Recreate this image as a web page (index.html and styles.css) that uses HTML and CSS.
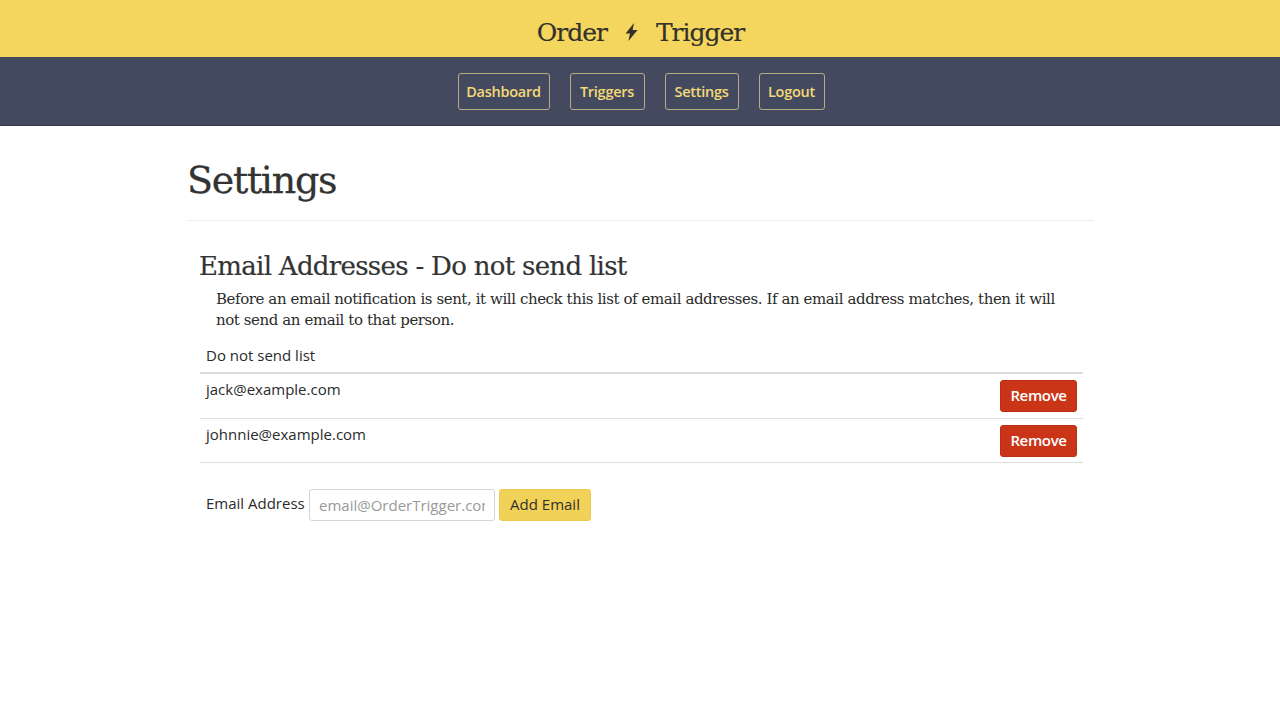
FILE: index.html
```html
<!DOCTYPE html>
<html lang="en">
<head>
<meta charset="utf-8">
<title>Order Trigger - Settings</title>
<link rel="stylesheet" href="styles.css">
</head>
<body>
<header class="brand">
  <span>Order</span>
  <svg class="bolt" viewBox="0 0 13 18" width="13" height="18" aria-hidden="true"><path d="M9 0 .6 10.4H5L3.4 18 12.6 7H7.6Z"/></svg>
  <span>Trigger</span>
</header>
<nav class="nav">
  <a class="nav-link nav-dashboard" href="#">Dashboard</a>
  <a class="nav-link nav-triggers" href="#">Triggers</a>
  <a class="nav-link nav-settings" href="#">Settings</a>
  <a class="nav-link nav-logout" href="#">Logout</a>
</nav>
<main class="container">
  <h1 class="page-title">Settings</h1>
  <section class="section">
    <h2 class="section-title">Email Addresses - Do not send list</h2>
    <p class="intro">Before an email notification is sent, it will check this list of email addresses. If an email address matches, then it will not send an email to that person.</p>
    <div class="table">
      <div class="table-head">Do not send list</div>
      <div class="row">
        <span class="email">jack@example.com</span>
        <button class="btn btn-remove" type="button">Remove</button>
      </div>
      <div class="row">
        <span class="email">johnnie@example.com</span>
        <button class="btn btn-remove" type="button">Remove</button>
      </div>
    </div>
    <form class="add-form">
      <label class="add-label" for="email">Email Address</label>
      <input class="add-input" id="email" type="text" placeholder="email@OrderTrigger.com">
      <button class="btn btn-add" type="button">Add Email</button>
    </form>
  </section>
</main>
</body>
</html>
```
FILE: styles.css
```css
* { box-sizing: border-box; }
html, body { margin: 0; padding: 0; background: #fff; }
body { font-family: "Open Sans", "Noto Sans", sans-serif; color: #2b2b2b; }

.brand {
  height: 57px;
  background: #f4d65f;
  display: flex;
  align-items: center;
  justify-content: center;
  gap: 18px;
  padding-top: 8px;
  padding-bottom: 0;
  padding-left: 1px;
  font-family: "DejaVu Serif", serif;
  font-size: 25px;
  letter-spacing: -1px;
  color: #33312a;
  -webkit-text-stroke: 0.2px #33312a;
}
.bolt { fill: #33312a; margin-top: -1px; }

.nav {
  height: 69px;
  background: #434a60;
  border-bottom: 1px solid #353b4e;
  display: flex;
  justify-content: center;
  align-items: flex-start;
  padding-top: 16px;
  padding-left: 2px;
  gap: 20px;
}
.nav-link {
  height: 37px;
  display: flex;
  align-items: center;
  justify-content: center;
  border: 1px solid #b5ae84;
  border-radius: 3px;
  color: #f4d976;
  font-weight: 600;
  font-size: 14.5px;
  letter-spacing: -0.25px;
  text-decoration: none;
}
.nav-dashboard { width: 92px; }
.nav-triggers { width: 75px; }
.nav-settings { width: 74px; }
.nav-logout { width: 66px; }

.container { width: 906px; margin: 0 0 0 188px; }
.page-title {
  margin: 0;
  height: 95px;
  padding-top: 29px;
  border-bottom: 1px solid #eee;
  font-family: "DejaVu Serif", serif;
  font-weight: 400;
  font-size: 38px;
  line-height: 50px;
  letter-spacing: -1.3px;
  text-indent: -1px;
  color: #333;
  -webkit-text-stroke: 0.3px #333;
}
.section { padding: 27px 11px 0 12px; }
.section-title {
  margin: 0;
  font-family: "DejaVu Serif", serif;
  font-weight: 400;
  font-size: 26px;
  line-height: 36px;
  letter-spacing: -0.7px;
  text-indent: -1px;
  color: #333;
  -webkit-text-stroke: 0.2px #333;
}
.intro {
  margin: 5px 0 0;
  padding: 0 24px 0 16px;
  font-family: "DejaVu Serif", serif;
  font-size: 15px;
  line-height: 21px;
  letter-spacing: -0.42px;
  color: #2b2b2b;
}
.table { margin-top: 6px; }
.table-head {
  height: 37px;
  padding: 8px 6px 0;
  font-size: 15px;
  line-height: 20px;
  color: #2b2b2b;
  border-bottom: 2px solid #ddd;
}
.row {
  height: 44.5px;
  display: flex;
  justify-content: space-between;
  align-items: flex-start;
  padding: 6px 6px 0;
  border-bottom: 1px solid #ddd;
}
.email { font-size: 15px; line-height: 18px; }
.btn {
  font-family: "Open Sans", "Noto Sans", sans-serif;
  font-size: 15px;
  border-radius: 3px;
  padding: 0 0 2px;
  cursor: pointer;
}
.btn-remove {
  width: 77px;
  height: 32px;
  background: #cb3517;
  border: 1px solid #b93014;
  color: #fff;
  font-weight: 600;
  letter-spacing: -0.35px;
}
.add-form {
  display: flex;
  align-items: flex-start;
  margin-top: 26px;
  padding-left: 6px;
}
.add-label { font-size: 15px; line-height: 20px; margin-top: 4px; width: 103px; }
.add-input {
  width: 186px;
  height: 32px;
  margin-right: 4px;
  padding: 0 9px;
  border: 1px solid #d5d5d5;
  border-radius: 3px;
  font-family: "Open Sans", "Noto Sans", sans-serif;
  font-size: 15px;
  color: #333;
}
.add-input::placeholder { color: #999; opacity: 1; }
.btn-add {
  width: 92px;
  height: 32px;
  background: #f2d158;
  border: 1px solid #ecca50;
  color: #33312a;
}
```
